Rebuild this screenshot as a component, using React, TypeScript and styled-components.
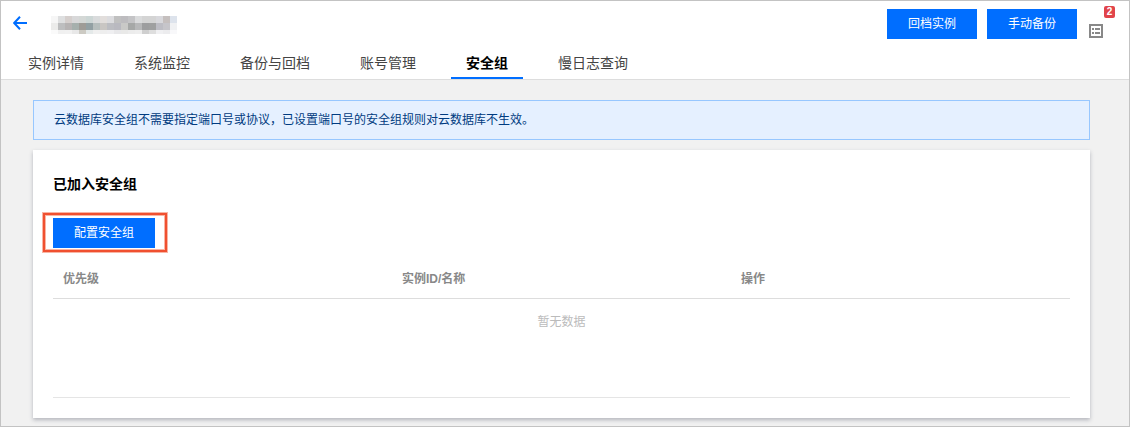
import React from "react";
import styled, { createGlobalStyle } from "styled-components";

const Global = createGlobalStyle`
  *, *::before, *::after { box-sizing: border-box; }
  body {
    margin: 0;
    background: #f1f1f1;
    font: 12px/18px "Liberation Sans", "Noto Sans CJK SC", sans-serif;
    color: #000;
  }
`;

const Page = styled.div`
  min-height: 100vh;
  border: 1px solid #c3c3c3;
  background: #f1f1f1;
`;

const Header = styled.header`
  background: #fff;
  border-bottom: 1px solid #ddd;
`;

const TitleBar = styled.div`
  display: flex;
  align-items: center;
  height: 46px;
  padding: 0 14px 0 12px;
`;

const BackLink = styled.a`
  display: flex;
  margin-right: 24px;
  padding-bottom: 2px;
`;

const MaskedName = styled.svg`
  display: block;
  margin-top: 2px;
`;

const Actions = styled.div`
  display: flex;
  align-items: center;
  gap: 10px;
  margin-left: auto;
`;

const Button = styled.button<{ $wide?: boolean }>`
  display: block;
  width: ${(p) => (p.$wide ? 102 : 90)}px;
  height: 30px;
  padding: 0;
  border: 0;
  background: #006eff;
  color: #fff;
  font: inherit;
  cursor: pointer;
`;

const ListButton = styled.button`
  position: relative;
  display: flex;
  align-items: flex-end;
  width: 38px;
  height: 30px;
  padding: 0 0 1px 12px;
  margin-left: -10px;
  border: 0;
  background: none;
  cursor: pointer;
`;

const Badge = styled.span`
  position: absolute;
  top: -3px;
  right: 0;
  width: 11px;
  height: 12px;
  border-radius: 2px;
  background: #e1444a;
  color: #fff;
  font: bold 10px/12px "Liberation Sans", sans-serif;
  text-align: center;
`;

const Tabs = styled.nav`
  display: flex;
  gap: 20px;
  padding: 0 12px;
`;

const Tab = styled.a<{ $active?: boolean }>`
  height: 32px;
  padding: 0 15px;
  border-bottom: 2px solid ${(p) => (p.$active ? "#006eff" : "transparent")};
  color: ${(p) => (p.$active ? "#000" : "#444")};
  font-size: 14px;
  font-weight: ${(p) => (p.$active ? 700 : 400)};
  line-height: 32px;
  text-decoration: none;
  white-space: nowrap;
`;

const Main = styled.main`
  padding: 20px 39px 8px 32px;
`;

const Notice = styled.p`
  margin: 0 0 10px;
  padding: 10px 20px;
  border: 1px solid #97c7ff;
  background: #e5f0ff;
  color: #003b80;
`;

const Card = styled.section`
  padding: 24px 20px 20px;
  background: #fff;
  box-shadow: 0 2px 4px rgba(54, 58, 80, 0.32);
`;

const CardTitle = styled.h2`
  margin: 0;
  font-size: 14px;
  line-height: 20px;
`;

const Highlight = styled.div`
  width: fit-content;
  margin: 19px 0 0 -10px;
  padding: 3px 10px 2px 8px;
  border: 2px solid #f05030;
  box-shadow: 0 0 0 1px #f8b5a4, inset 0 0 0 1px #f8b5a4;
`;

const Table = styled.table`
  width: 100%;
  margin-top: 8px;
  border-collapse: collapse;
  table-layout: fixed;
`;

const HeadCell = styled.th`
  height: 38px;
  padding: 0 10px;
  border-bottom: 1px solid #ddd;
  color: #888;
  text-align: left;
`;

const EmptyCell = styled.td`
  height: 99px;
  padding: 14px 10px;
  border-bottom: 1px solid #e5e5e5;
  color: #bbb;
  text-align: center;
  vertical-align: top;
`;

const tabs = ["实例详情", "系统监控", "备份与回档", "账号管理", "安全组", "慢日志查询"];
const columns = ["优先级", "实例ID/名称", "操作"];

const mosaic = [
  "#f6f6f6 #dedfe0 #d5cfcd #d8d8d9 #d4d8d6 #ccd6d5 #d9dbdc #e2dedc #dcdcdf #c0c0c0 #bdbcbf #c4c4c6 #dadbdc #d4d4d4 #d4d4d4 #d8d8dc #c5bfbe #dde3ec",
  "#ebebea #bdbebf #b6b3b3 #a6b0ad #9e9c97 #92a0a3 #b6bebd #c9c6c3 #bcbdc2 #b9b9c0 #c9c9c7 #a6a8a7 #b7b8b9 #9d9e9f #9fa0a0 #bdbdc4 #c6c5ca #f0f1f3",
  "#fafafa #f0f0f0 #f1f1f1 #e8e8e8 #cccac3 #e4e9e9 #f0f0f0 #eeeeee #efeff1 #e8e8ea #e9e9e8 #ececec #eeeeee #cfcfcf #dedede #f0f0f2 #ececee #f8f8fa",
].map((row) => row.split(" "));

export default function App() {
  return (
    <Page>
      <Global />
      <Header>
        <TitleBar>
          <BackLink href="#" aria-label="返回">
            <svg width="14" height="14" viewBox="0 0 14 14" fill="none" stroke="#006eff" strokeWidth="2">
              <path d="M14 7H1.5M7 .8L1.2 7L7 13.2" />
            </svg>
          </BackLink>
          <MaskedName width="126" height="18" shapeRendering="crispEdges" aria-hidden="true">
            {mosaic.map((row, y) =>
              row.map((fill, x) => (
                <rect key={`${x}-${y}`} x={x * 7} y={y * 7} width="7" height={y === 2 ? 4 : 7} fill={fill} />
              ))
            )}
          </MaskedName>
          <Actions>
            <Button type="button">回档实例</Button>
            <Button type="button">手动备份</Button>
            <ListButton type="button" aria-label="任务列表">
              <svg width="14" height="14" viewBox="0 0 14 14" shapeRendering="crispEdges">
                <path d="M1 1H13V13H1Z" fill="none" stroke="#888" strokeWidth="2" />
                <path d="M3 4h2v2H3zM6 4h5v2H6zM3 8h2v2H3zM6 8h5v2H6z" fill="#888" />
              </svg>
              <Badge>2</Badge>
            </ListButton>
          </Actions>
        </TitleBar>
        <Tabs>
          {tabs.map((name) => (
            <Tab key={name} href="#" $active={name === "安全组"}>
              {name}
            </Tab>
          ))}
        </Tabs>
      </Header>
      <Main>
        <Notice>云数据库安全组不需要指定端口号或协议，已设置端口号的安全组规则对云数据库不生效。</Notice>
        <Card>
          <CardTitle>已加入安全组</CardTitle>
          <Highlight>
            <Button type="button" $wide>
              配置安全组
            </Button>
          </Highlight>
          <Table>
            <thead>
              <tr>
                {columns.map((name) => (
                  <HeadCell key={name} scope="col">
                    {name}
                  </HeadCell>
                ))}
              </tr>
            </thead>
            <tbody>
              <tr>
                <EmptyCell colSpan={3}>暂无数据</EmptyCell>
              </tr>
            </tbody>
          </Table>
        </Card>
      </Main>
    </Page>
  );
}
